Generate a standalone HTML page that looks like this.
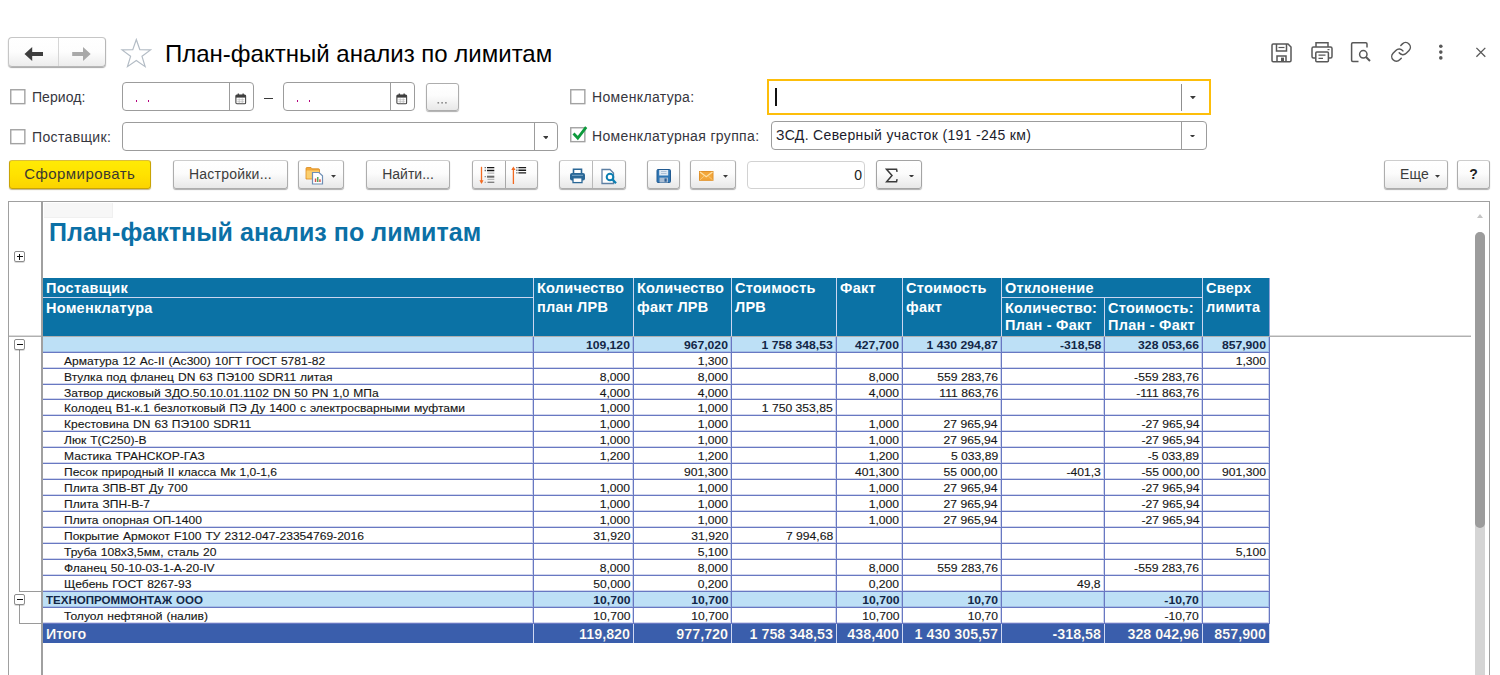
<!DOCTYPE html><html lang="ru"><head><meta charset="utf-8"><title>План-фактный анализ по лимитам</title><style>
*{box-sizing:border-box;margin:0;padding:0}
html,body{width:1500px;height:675px;overflow:hidden;background:#fff}
body{position:relative;font-family:"Liberation Sans",sans-serif;color:#3b3b3b;font-size:14px}
.a{position:absolute}
.btn{position:absolute;border:1px solid #adadad;border-radius:3px;background:linear-gradient(#ffffff 0%,#fcfcfc 45%,#e8e8e8 100%);box-shadow:0 1px 1px rgba(0,0,0,.32);height:28px;top:161px}
.tb{top:160px;height:29px;border-top-color:#cdcdcd}
.tb>svg{margin-top:1px}
.tb>.t{top:1px}
.btn .t{position:absolute;left:0;right:0;top:0;line-height:26px;text-align:center;font-size:14px;color:#3c3c3c;white-space:nowrap}
.inp{position:absolute;border:1px solid #9c9c9c;border-radius:4px;background:#fff;height:29px}
.inp .dv{position:absolute;top:0;bottom:0;width:1px;background:#9c9c9c}
.cb{position:absolute;width:15px;height:15px;border:1px solid #a3a3a3;background:#fff;box-shadow:inset 0 0 0 1px #f1f1f1}
.lbl{position:absolute;font-size:14px;line-height:16px;color:#36363e;white-space:nowrap}
.arr{position:absolute;width:0;height:0;border-left:2.800px solid transparent;border-right:2.800px solid transparent;border-top:2.800px solid #3c3c3c}
.hc{position:absolute;background:#0b72a5;color:#fff;font-weight:bold;font-size:14.500px;line-height:19px;padding:1px 0 0 3px;white-space:nowrap;letter-spacing:.25px}
.hc.s2{line-height:17px;padding-top:2px}
.row{position:absolute;left:43px;width:1227px;height:16px}
.c{position:absolute;top:0;height:16px;border-right:1px solid #6878c2;border-bottom:1px solid #6878c2;font-size:11.600px;line-height:15px;color:#161616;-webkit-text-stroke:.12px #161616;white-space:nowrap;text-align:right;padding-right:3px;overflow:hidden;box-shadow:inset -1px -1px 0 rgba(104,120,194,.3)}
.c span{display:inline-block;transform:scaleX(1.047);transform-origin:100% 50%}
.c.n span{word-spacing:.6px;transform:scaleX(1.04);transform-origin:0 50%}
.c.n{text-align:left;padding-left:21px}
.g .c{background:#bde0f6;font-weight:bold;color:#122646;-webkit-text-stroke:0}
.g .c span{transform:scaleX(1.05)}
.g .c.n span{transform:scaleX(.995)}
.g .c.n{padding-left:3px}
.tot{position:absolute;left:43px;top:624.400px;height:18.200px;width:1227px}
.tot .c{box-shadow:none;height:18.200px;background:#3a5eac;color:#fff;font-weight:bold;font-size:14.300px;line-height:20.400px;border-right:1px solid #cfd8f2;border-bottom:none}
.tot .c span,.tot .c.n span{transform:none}
.tot .c.n{padding-left:3px}
</style></head><body>
<div class="a" style="left:8px;top:37px;width:98px;height:30px;border:1px solid #b7b7b7;border-top-color:#c6c6c6;border-left-color:#c6c6c6;border-radius:4px;background:linear-gradient(#fff 0%,#fdfdfd 50%,#ececec 100%);box-shadow:0 1px 1px rgba(0,0,0,.35)">
<div class="a" style="left:48.500px;top:0;bottom:0;width:1px;background:#d6d6d6"></div>
<svg class="a" style="left:.500px;top:.500px" width="95" height="27" viewBox="0 0 95 27"><path d="M14.5 15 L22.2 8 L22.2 12.900 L33 12.900 L33 17.100 L22.2 17.100 L22.2 22 Z" fill="#3e3e3e"/><path d="M80.7 15 L73 8 L73 12.900 L62.2 12.900 L62.2 17.100 L73 17.100 L73 22 Z" fill="#a9a9a9"/></svg>
</div>
<svg class="a" style="left:118px;top:36px" width="36" height="34" viewBox="0 0 36 34"><polygon points="18.30,3.50 21.83,13.65 32.57,13.86 24.01,20.35 27.12,30.64 18.30,24.50 9.48,30.64 12.59,20.35 4.03,13.86 14.77,13.65" fill="#fff" stroke="#b3bcc5" stroke-width="1.2" stroke-linejoin="miter"/></svg>
<div class="a" style="left:165px;top:39.500px;font-size:24px;line-height:28px;color:#000;white-space:nowrap">План-фактный анализ по лимитам</div>
<svg class="a" style="left:1268px;top:39px" width="26" height="26" viewBox="0 0 26 26" fill="none" stroke="#585858" stroke-width="1.5">
<path d="M4 6.2 Q4 5 5.2 5 L20 5 L23 8 L23 21.6 Q23 22.8 21.8 22.8 L5.2 22.8 Q4 22.8 4 21.6 Z"/>
<path d="M8.5 5 L8.5 12 L18.5 12 L18.5 5"/><path d="M10.5 8.5 L16.5 8.5" stroke-width="1.2"/>
<path d="M9 22.8 L9 17 L18 17 L18 22.8"/><rect x="13" y="18.6" width="3" height="4" fill="#585858" stroke="none"/></svg>
<svg class="a" style="left:1309px;top:39px" width="26" height="26" viewBox="0 0 26 26" fill="none" stroke="#585858" stroke-width="1.5">
<path d="M7 8 L7 3.8 L19 3.8 L19 8"/>
<path d="M6.5 19 L4.5 19 Q3 19 3 17.5 L3 9.5 Q3 8 4.500 8 L21.5 8 Q23 8 23 9.5 L23 17.5 Q23 19 21.5 19 L19.500 19"/>
<rect x="6.8" y="13" width="12.6" height="9.8" rx="1"/>
<path d="M9.500 16.2 L16.500 16.2 M9.500 19.4 L14 19.4" stroke-width="1.2"/><path d="M18.5 10.6 L20.5 10.6" stroke-width="1.2"/></svg>
<svg class="a" style="left:1347px;top:39px" width="26" height="26" viewBox="0 0 26 26" fill="none" stroke="#585858" stroke-width="1.5">
<path d="M11.5 22.500 L5.8 22.500 Q4.6 22.500 4.6 21.3 L4.6 5 Q4.6 3.8 5.8 3.8 L18.8 3.8 Q20 3.8 20 5 L20 8.500"/>
<circle cx="16.3" cy="15.300" r="3.7"/><path d="M19 18 L23 22" stroke-width="2"/></svg>
<svg class="a" style="left:1387px;top:39px" width="28" height="26" viewBox="0 0 28 26" fill="none" stroke="#585858" stroke-width="1.6" stroke-linecap="round">
<g transform="translate(2.830,1.630) scale(.935)"><path d="M10 13a5 5 0 0 0 7.540.540l3-3a5 5 0 0 0-7.070-7.070l-1.720 1.710"/><path d="M14 11a5 5 0 0 0-7.540-.540l-3 3a5 5 0 0 0 7.070 7.070l1.710-1.710"/></g></svg>
<svg class="a" style="left:1436px;top:42px" width="10" height="22" viewBox="0 0 10 22"><circle cx="4.8" cy="4.300" r="1.800" fill="#585858"/><circle cx="4.8" cy="10.100" r="1.800" fill="#585858"/><circle cx="4.8" cy="15.900" r="1.800" fill="#585858"/></svg>
<svg class="a" style="left:1473px;top:44px" width="16" height="16" viewBox="0 0 16 16" stroke="#585858" stroke-width="1.3"><path d="M3.400 3.900 L12.300 12.800 M12.300 3.900 L3.400 12.800"/></svg>
<svg class="a" style="left:9px;top:88px" width="18" height="18"><rect x="1.750" y="1.750" width="14.100" height="13.900" fill="#fff" stroke="#a2a2a2" stroke-width="1.400"/></svg><div class="lbl" style="left:32px;top:89px;letter-spacing:.05px">Период:</div>
<div class="inp" style="left:122px;top:82px;width:132px"><div class="dv" style="left:106px"></div><div class="a" style="left:12.5px;top:17px;width:1.800px;height:1.800px;background:#b5007e"></div><div class="a" style="left:24.5px;top:17px;width:1.800px;height:1.800px;background:#b5007e"></div><svg class="a" style="left:112px;top:10px" width="11.500" height="11.500" viewBox="0 0 13 13"><rect x="1" y="2.200" width="11" height="10" rx="1.200" fill="#fff" stroke="#3f3f3f" stroke-width="1.2"/><rect x="1" y="2.200" width="11" height="3" fill="#3f3f3f"/><rect x="3" y="0.600" width="1.600" height="3" fill="#3f3f3f"/><rect x="8.400" y="0.600" width="1.600" height="3" fill="#3f3f3f"/><path d="M2.500 7.600 H10.500 M2.500 9.800 H10.500 M4.800 6 V11.500 M8.200 6 V11.500" stroke="#b9b9b9" stroke-width=".8"/></svg></div>
<div class="a" style="left:264px;top:98px;width:8.500px;height:1.300px;background:#3a3a3a"></div>
<div class="inp" style="left:283px;top:82px;width:132px"><div class="dv" style="left:106px"></div><div class="a" style="left:12.5px;top:17px;width:1.800px;height:1.800px;background:#b5007e"></div><div class="a" style="left:24.5px;top:17px;width:1.800px;height:1.800px;background:#b5007e"></div><svg class="a" style="left:112px;top:10px" width="11.500" height="11.500" viewBox="0 0 13 13"><rect x="1" y="2.200" width="11" height="10" rx="1.200" fill="#fff" stroke="#3f3f3f" stroke-width="1.2"/><rect x="1" y="2.200" width="11" height="3" fill="#3f3f3f"/><rect x="3" y="0.600" width="1.600" height="3" fill="#3f3f3f"/><rect x="8.400" y="0.600" width="1.600" height="3" fill="#3f3f3f"/><path d="M2.500 7.600 H10.500 M2.500 9.800 H10.500 M4.800 6 V11.500 M8.200 6 V11.500" stroke="#b9b9b9" stroke-width=".8"/></svg></div>
<div class="btn" style="left:425.500px;top:82.500px;width:33px;height:28px"><svg class="a" style="left:9px;top:16px" width="14" height="5"><rect x="1.500" y="2" width="1.600" height="1.600" fill="#8a8a8a"/><rect x="5.300" y="2" width="1.600" height="1.600" fill="#8a8a8a"/><rect x="9.100" y="2" width="1.600" height="1.600" fill="#8a8a8a"/></svg></div>
<svg class="a" style="left:569px;top:88px" width="18" height="18"><rect x="1.750" y="1.750" width="14.100" height="13.900" fill="#fff" stroke="#a2a2a2" stroke-width="1.400"/></svg><div class="lbl" style="left:592px;top:89px;letter-spacing:.35px">Номенклатура:</div>
<div class="a" style="left:767px;top:78.500px;width:443.500px;height:36.500px;border:2px solid #fdbe0a;background:#fff"><div class="a" style="left:6px;top:7.500px;width:1.500px;height:18px;background:#111"></div><div class="a" style="left:411.700px;top:3px;width:1px;height:27px;background:#8f8f8f"></div><svg class="a" style="left:421.1px;top:15.3px" width="5.8" height="3.3" viewBox="0 0 5.8 3.3"><path d="M0 0 H5.8 L2.9 3.3 Z" fill="#3a3a3a"/></svg></div>
<svg class="a" style="left:9px;top:128px" width="18" height="18"><rect x="1.750" y="1.750" width="14.100" height="13.900" fill="#fff" stroke="#a2a2a2" stroke-width="1.400"/></svg><div class="lbl" style="left:32px;top:129px;letter-spacing:.36px">Поставщик:</div>
<div class="inp" style="left:122px;top:122px;width:436px"><div class="dv" style="left:410.500px"></div><svg class="a" style="left:419.6px;top:13.0px" width="5.8" height="3.3" viewBox="0 0 5.8 3.3"><path d="M0 0 H5.8 L2.9 3.3 Z" fill="#3a3a3a"/></svg></div>
<svg class="a" style="left:569.300px;top:126.400px" width="18" height="18"><rect x="1.750" y="1.750" width="14.100" height="13.900" fill="#fff" stroke="#a2a2a2" stroke-width="1.400"/></svg><svg class="a" style="left:570px;top:124px" width="20" height="20" viewBox="0 0 20 20"><path d="M3.500 9.500 L7.800 14 L16.200 3.200" fill="none" stroke="#0d9a3c" stroke-width="2.800"/></svg><div class="lbl" style="left:592px;top:127.800px;letter-spacing:.35px">Номенклатурная группа:</div>
<div class="inp" style="left:771px;top:121px;width:435.500px"><div class="dv" style="left:409px"></div><svg class="a" style="left:418.2px;top:12.5px" width="5.0" height="2.8" viewBox="0 0 5.0 2.8"><path d="M0 0 H5.0 L2.5 2.8 Z" fill="#3a3a3a"/></svg><div class="a" style="left:4px;top:5px;font-size:14px;line-height:17px;color:#1c1c2c;white-space:nowrap;letter-spacing:.35px">ЗСД. Северный участок (191 -245 км)</div></div>
<div class="btn tb" style="left:8.500px;width:142.500px;border-color:#c9a405;border-top-color:#dcbf3a;background:linear-gradient(#ffea05 0%,#ffe200 50%,#fbd300 100%);box-shadow:0 1px 1px rgba(120,90,0,.45)"><div class="t" style="font-size:15px;letter-spacing:.45px;color:#3b3930">Сформировать</div></div>
<div class="btn tb" style="left:173px;width:115px"><div class="t" style="letter-spacing:.22px">Настройки...</div></div>
<div class="btn tb" style="left:298px;width:46px"><svg class="a" style="left:6px;top:2.700px" width="20" height="20" viewBox="0 0 20 20"><path d="M1 3.500 Q1 2.500 2 2.500 L6 2.500 L7.200 3.800 L13.500 3.800 Q14.500 3.800 14.500 4.800 L14.500 14 L1 14 Z" fill="#f2a83a" stroke="#d98a1c" stroke-width=".8"/><path d="M1.500 5.500 H14 V13.500 H1.500 Z" fill="#fbcf6e"/><path d="M7.500 7.500 H14 L17.500 10.800 V19 H7.500 Z" fill="#fff" stroke="#6f8fb5" stroke-width="1.200"/><rect x="9.800" y="13.500" width="1.500" height="3.500" fill="#d4534a"/><rect x="12" y="12" width="1.500" height="5" fill="#58a65c"/><rect x="14.200" y="14.300" width="1.500" height="2.700" fill="#d4534a"/></svg><svg class="a" style="left:32.0px;top:13.0px" width="5.0" height="2.8" viewBox="0 0 5.0 2.8"><path d="M0 0 H5.0 L2.5 2.8 Z" fill="#3a3a3a"/></svg></div>
<div class="btn tb" style="left:366px;width:84px"><div class="t">Найти...</div></div>
<div class="btn tb" style="left:472px;width:66px"><div class="a" style="left:32px;top:0;bottom:0;width:1px;background:#a8a8a8"></div>
<svg class="a" style="left:0;top:-1px" width="64" height="27" viewBox="0 0 64 27"><path d="M8.500 5.800 V21.500" stroke="#f26a21" stroke-width="1.300"/><path d="M6.500 19.300 L8.500 23 L10.500 19.300 Z" fill="#f26a21"/>
<path d="M14 6.600 H21.300 M14 9.500 H21.300" stroke="#161616" stroke-width="1.300"/><path d="M11.600 6.600 H12.900 M11.600 9.500 H12.900" stroke="#666" stroke-width="1.300"/>
<path d="M14.500 12.200 H21.300 M14.500 18.300 H21.300" stroke="#b5b5b5" stroke-width="1.300"/>
<path d="M14 15.700 H21.300" stroke="#6a6a6a" stroke-width="2"/><path d="M11.600 15.700 H12.900" stroke="#8a8a8a" stroke-width="1.300"/>
<path d="M14.500 21.300 H21.300" stroke="#7a7a7a" stroke-width="1.300"/><path d="M11.600 21.300 H12.900" stroke="#aaa" stroke-width="1.300"/>
<path d="M40.400 7 V23" stroke="#f26a21" stroke-width="1.300"/><path d="M38.300 9 L40.400 5.500 L42.500 9 Z" fill="#f26a21"/>
<path d="M45.400 6.600 H53.100 M45.400 9.300 H53.100 M45.400 11.900 H53.100" stroke="#1a1a1a" stroke-width="1.400"/><path d="M43.200 6.600 H44.500 M43.200 9.300 H44.500 M43.200 11.900 H44.500" stroke="#666" stroke-width="1.400"/></svg></div>
<div class="btn tb" style="left:559px;width:67px"><div class="a" style="left:32px;top:0;bottom:0;width:1px;background:#b9b9b9"></div>
<svg class="a" style="left:0;top:0" width="65" height="26" viewBox="0 0 65 26">
<path d="M13.500 11 V7.200 H21.500 V11" fill="#fff" stroke="#2a6796" stroke-width="1.600"/>
<rect x="10" y="11" width="15" height="7.500" rx="2" fill="#2a6796"/>
<rect x="13" y="15.800" width="9" height="4.800" fill="#fff" stroke="#2a6796" stroke-width="1.300"/>
<path d="M12 13.300 H23" stroke="#7fa9c9" stroke-width="1"/>
<path d="M42 7.500 H50 L53.500 11 V21.500 H42 Z" fill="#fff" stroke="#5d7fa3" stroke-width="1.300"/>
<circle cx="50" cy="15" r="3.300" fill="#fff" stroke="#0c7fb2" stroke-width="2"/><path d="M52.500 17.500 L56 21.200" stroke="#0c7fb2" stroke-width="2.300"/></svg></div>
<div class="btn tb" style="left:647px;width:33px"><svg class="a" style="left:0;top:0" width="31" height="26" viewBox="0 0 31 26">
<rect x="9" y="7.500" width="13.500" height="13" rx="1" fill="#2f76b5" stroke="#215a91" stroke-width="1"/><rect x="11.200" y="8" width="9" height="5.500" fill="#dfe9f3"/><path d="M13 9.500 H18.500 M13 11.500 H18.500" stroke="#9fb6cf" stroke-width=".8"/><rect x="11.500" y="15.600" width="8.500" height="4.900" fill="#a9bdd3"/><rect x="16.500" y="16.400" width="2.200" height="3.300" fill="#2f5f95"/></svg></div>
<div class="btn tb" style="left:690px;width:46px"><svg class="a" style="left:0;top:0" width="44" height="26" viewBox="0 0 44 26">
<rect x="8.500" y="9.500" width="13.500" height="8.800" fill="#f3a73b" stroke="#e0912a" stroke-width="1"/><path d="M9 10 L15.250 14.800 L21.500 10" fill="none" stroke="#fde1a6" stroke-width="1.300"/><path d="M9 17.800 L13.200 14 M21.500 17.800 L17.300 14" stroke="#f9c877" stroke-width="1"/></svg><svg class="a" style="left:32.0px;top:13.0px" width="5.0" height="2.8" viewBox="0 0 5.0 2.8"><path d="M0 0 H5.0 L2.5 2.8 Z" fill="#3a3a3a"/></svg></div>
<div class="a" style="left:747px;top:161px;width:118px;height:28px;border:1px solid #d2d2d2;border-radius:4px;background:#fff"><div class="a" style="right:2px;top:5px;font-size:14px;line-height:16px;color:#222">0</div></div>
<div class="btn tb" style="left:876px;width:46px;border-color:#a4a4a4"><svg class="a" style="left:8.300px;top:5.500px" width="14" height="15.750" viewBox="0 0 16 18"><path d="M13.800 4.500 L13.200 1.500 L1.800 1.500 L8 8.500 L1.800 15.800 L13.200 15.800 L13.800 12.800" fill="none" stroke="#3a3a3a" stroke-width="1.700" stroke-linejoin="miter"/></svg><svg class="a" style="left:31.8px;top:12.7px" width="5.0" height="2.8" viewBox="0 0 5.0 2.8"><path d="M0 0 H5.0 L2.5 2.8 Z" fill="#3a3a3a"/></svg></div>
<div class="btn tb" style="left:1384px;width:64px"><div class="t" style="text-align:left;left:15px;letter-spacing:.1px">Еще</div><svg class="a" style="left:50.0px;top:13.0px" width="5.0" height="2.8" viewBox="0 0 5.0 2.8"><path d="M0 0 H5.0 L2.5 2.8 Z" fill="#3a3a3a"/></svg></div>
<div class="btn tb" style="left:1457px;width:33px"><div class="t" style="font-weight:bold;color:#222">?</div></div>
<div class="a" style="left:8px;top:200.500px;width:1482px;height:480px;border:1.500px solid #a0a0a0;background:#fff"></div>
<div class="a" style="left:41.400px;top:202px;width:1.400px;height:480px;background:#a0a0a0"></div>
<div class="a" style="left:44px;top:203px;width:69px;height:15px;background:#f7f7f7;border-right:1px solid #f0f0f0;border-bottom:1px solid #f0f0f0"></div>
<div class="a" style="left:49px;top:217px;font-size:25px;line-height:30px;font-weight:bold;color:#0b70a6;white-space:nowrap;letter-spacing:.04px">План-фактный анализ по лимитам</div>
<div class="a" style="left:14px;top:251px;width:11px;height:11px;border:1px solid #8c8c8c;border-radius:2px;background:#fff;box-shadow:0 1px 0 rgba(0,0,0,.15)"><div class="a" style="left:1.500px;top:3.600px;width:6px;height:1.800px;background:#111"></div><div class="a" style="left:3.600px;top:1.500px;width:1.800px;height:6px;background:#111"></div></div>
<svg class="a" style="left:9px;top:334px" width="1463" height="4"><rect x="0" y="1.600" width="1462" height="1.250" fill="#a3a3a3"/></svg>
<div class="a" style="left:19px;top:350px;width:1.300px;height:241px;background:#9a9a9a"></div>
<div class="a" style="left:19px;top:590.500px;width:23px;height:1.300px;background:#9a9a9a"></div>
<div class="a" style="left:19px;top:605px;width:1.300px;height:18px;background:#9a9a9a"></div>
<div class="a" style="left:19px;top:622.500px;width:23px;height:1.300px;background:#9a9a9a"></div>
<div class="a" style="left:14px;top:339px;width:11px;height:11px;border:1px solid #8c8c8c;border-radius:2px;background:#fff;box-shadow:0 1px 0 rgba(0,0,0,.15)"><div class="a" style="left:1.500px;top:3.600px;width:6px;height:1.800px;background:#111"></div></div>
<div class="a" style="left:14px;top:594px;width:11px;height:11px;border:1px solid #8c8c8c;border-radius:2px;background:#fff;box-shadow:0 1px 0 rgba(0,0,0,.15)"><div class="a" style="left:1.500px;top:3.600px;width:6px;height:1.800px;background:#111"></div></div>
<div class="a" style="left:43px;top:278px;width:1227px;height:58px;background:#cbd6f0"></div>
<div class="hc " style="left:43px;top:278px;width:490px;height:19px">Поставщик</div>
<div class="hc " style="left:43px;top:298px;width:490px;height:38px">Номенклатура</div>
<div class="hc " style="left:534px;top:278px;width:99px;height:58px">Количество<br>план ЛРВ</div>
<div class="hc " style="left:634px;top:278px;width:97px;height:58px">Количество<br>факт ЛРВ</div>
<div class="hc " style="left:732px;top:278px;width:104px;height:58px">Стоимость<br>ЛРВ</div>
<div class="hc " style="left:837px;top:278px;width:65px;height:58px">Факт</div>
<div class="hc " style="left:903px;top:278px;width:98px;height:58px">Стоимость<br>факт</div>
<div class="hc " style="left:1002px;top:278px;width:200px;height:19px">Отклонение</div>
<div class="hc s2" style="left:1002px;top:298px;width:102px;height:38px">Количество:<br>План - Факт</div>
<div class="hc s2" style="left:1105px;top:298px;width:97px;height:38px">Стоимость:<br>План - Факт</div>
<div class="hc " style="left:1203px;top:278px;width:66px;height:58px">Сверх<br>лимита</div>
<div class="a" style="left:1269px;top:278px;width:1px;height:58px;background:#8fa3d6"></div>
<div class="row g" style="top:337px;height:16px"><div class="c n" style="left:0px;width:491px"><span></span></div><div class="c " style="left:491px;width:100px"><span>109,120</span></div><div class="c " style="left:591px;width:98px"><span>967,020</span></div><div class="c " style="left:689px;width:105px"><span>1 758 348,53</span></div><div class="c " style="left:794px;width:66px"><span>427,700</span></div><div class="c " style="left:860px;width:99px"><span>1 430 294,87</span></div><div class="c " style="left:959px;width:103px"><span>-318,58</span></div><div class="c " style="left:1062px;width:98px"><span>328 053,66</span></div><div class="c " style="left:1160px;width:67px"><span>857,900</span></div></div>
<div class="row " style="top:353px;height:16px"><div class="c n" style="left:0px;width:491px"><span>Арматура 12 Ас-II (Ас300) 10ГТ ГОСТ 5781-82</span></div><div class="c " style="left:491px;width:100px"><span></span></div><div class="c " style="left:591px;width:98px"><span>1,300</span></div><div class="c " style="left:689px;width:105px"><span></span></div><div class="c " style="left:794px;width:66px"><span></span></div><div class="c " style="left:860px;width:99px"><span></span></div><div class="c " style="left:959px;width:103px"><span></span></div><div class="c " style="left:1062px;width:98px"><span></span></div><div class="c " style="left:1160px;width:67px"><span>1,300</span></div></div>
<div class="row " style="top:369px;height:16px"><div class="c n" style="left:0px;width:491px"><span>Втулка под фланец DN 63 ПЭ100 SDR11 литая</span></div><div class="c " style="left:491px;width:100px"><span>8,000</span></div><div class="c " style="left:591px;width:98px"><span>8,000</span></div><div class="c " style="left:689px;width:105px"><span></span></div><div class="c " style="left:794px;width:66px"><span>8,000</span></div><div class="c " style="left:860px;width:99px"><span>559 283,76</span></div><div class="c " style="left:959px;width:103px"><span></span></div><div class="c " style="left:1062px;width:98px"><span>-559 283,76</span></div><div class="c " style="left:1160px;width:67px"><span></span></div></div>
<div class="row " style="top:385px;height:15px"><div class="c n" style="left:0px;width:491px;height:15px"><span>Затвор дисковый ЗДО.50.10.01.1102 DN 50 PN 1,0 МПа</span></div><div class="c " style="left:491px;width:100px;height:15px"><span>4,000</span></div><div class="c " style="left:591px;width:98px;height:15px"><span>4,000</span></div><div class="c " style="left:689px;width:105px;height:15px"><span></span></div><div class="c " style="left:794px;width:66px;height:15px"><span>4,000</span></div><div class="c " style="left:860px;width:99px;height:15px"><span>111 863,76</span></div><div class="c " style="left:959px;width:103px;height:15px"><span></span></div><div class="c " style="left:1062px;width:98px;height:15px"><span>-111 863,76</span></div><div class="c " style="left:1160px;width:67px;height:15px"><span></span></div></div>
<div class="row " style="top:400px;height:16px"><div class="c n" style="left:0px;width:491px"><span>Колодец В1-к.1 безлотковый ПЭ Ду 1400 с электросварными муфтами</span></div><div class="c " style="left:491px;width:100px"><span>1,000</span></div><div class="c " style="left:591px;width:98px"><span>1,000</span></div><div class="c " style="left:689px;width:105px"><span>1 750 353,85</span></div><div class="c " style="left:794px;width:66px"><span></span></div><div class="c " style="left:860px;width:99px"><span></span></div><div class="c " style="left:959px;width:103px"><span></span></div><div class="c " style="left:1062px;width:98px"><span></span></div><div class="c " style="left:1160px;width:67px"><span></span></div></div>
<div class="row " style="top:416px;height:16px"><div class="c n" style="left:0px;width:491px"><span>Крестовина DN 63 ПЭ100 SDR11</span></div><div class="c " style="left:491px;width:100px"><span>1,000</span></div><div class="c " style="left:591px;width:98px"><span>1,000</span></div><div class="c " style="left:689px;width:105px"><span></span></div><div class="c " style="left:794px;width:66px"><span>1,000</span></div><div class="c " style="left:860px;width:99px"><span>27 965,94</span></div><div class="c " style="left:959px;width:103px"><span></span></div><div class="c " style="left:1062px;width:98px"><span>-27 965,94</span></div><div class="c " style="left:1160px;width:67px"><span></span></div></div>
<div class="row " style="top:432px;height:16px"><div class="c n" style="left:0px;width:491px"><span>Люк Т(С250)-В</span></div><div class="c " style="left:491px;width:100px"><span>1,000</span></div><div class="c " style="left:591px;width:98px"><span>1,000</span></div><div class="c " style="left:689px;width:105px"><span></span></div><div class="c " style="left:794px;width:66px"><span>1,000</span></div><div class="c " style="left:860px;width:99px"><span>27 965,94</span></div><div class="c " style="left:959px;width:103px"><span></span></div><div class="c " style="left:1062px;width:98px"><span>-27 965,94</span></div><div class="c " style="left:1160px;width:67px"><span></span></div></div>
<div class="row " style="top:448px;height:16px"><div class="c n" style="left:0px;width:491px"><span>Мастика ТРАНСКОР-ГАЗ</span></div><div class="c " style="left:491px;width:100px"><span>1,200</span></div><div class="c " style="left:591px;width:98px"><span>1,200</span></div><div class="c " style="left:689px;width:105px"><span></span></div><div class="c " style="left:794px;width:66px"><span>1,200</span></div><div class="c " style="left:860px;width:99px"><span>5 033,89</span></div><div class="c " style="left:959px;width:103px"><span></span></div><div class="c " style="left:1062px;width:98px"><span>-5 033,89</span></div><div class="c " style="left:1160px;width:67px"><span></span></div></div>
<div class="row " style="top:464px;height:16px"><div class="c n" style="left:0px;width:491px"><span>Песок природный II класса Мк 1,0-1,6</span></div><div class="c " style="left:491px;width:100px"><span></span></div><div class="c " style="left:591px;width:98px"><span>901,300</span></div><div class="c " style="left:689px;width:105px"><span></span></div><div class="c " style="left:794px;width:66px"><span>401,300</span></div><div class="c " style="left:860px;width:99px"><span>55 000,00</span></div><div class="c " style="left:959px;width:103px"><span>-401,3</span></div><div class="c " style="left:1062px;width:98px"><span>-55 000,00</span></div><div class="c " style="left:1160px;width:67px"><span>901,300</span></div></div>
<div class="row " style="top:480px;height:16px"><div class="c n" style="left:0px;width:491px"><span>Плита ЗПВ-ВТ Ду 700</span></div><div class="c " style="left:491px;width:100px"><span>1,000</span></div><div class="c " style="left:591px;width:98px"><span>1,000</span></div><div class="c " style="left:689px;width:105px"><span></span></div><div class="c " style="left:794px;width:66px"><span>1,000</span></div><div class="c " style="left:860px;width:99px"><span>27 965,94</span></div><div class="c " style="left:959px;width:103px"><span></span></div><div class="c " style="left:1062px;width:98px"><span>-27 965,94</span></div><div class="c " style="left:1160px;width:67px"><span></span></div></div>
<div class="row " style="top:496px;height:16px"><div class="c n" style="left:0px;width:491px"><span>Плита ЗПН-В-7</span></div><div class="c " style="left:491px;width:100px"><span>1,000</span></div><div class="c " style="left:591px;width:98px"><span>1,000</span></div><div class="c " style="left:689px;width:105px"><span></span></div><div class="c " style="left:794px;width:66px"><span>1,000</span></div><div class="c " style="left:860px;width:99px"><span>27 965,94</span></div><div class="c " style="left:959px;width:103px"><span></span></div><div class="c " style="left:1062px;width:98px"><span>-27 965,94</span></div><div class="c " style="left:1160px;width:67px"><span></span></div></div>
<div class="row " style="top:512px;height:16px"><div class="c n" style="left:0px;width:491px"><span>Плита опорная ОП-1400</span></div><div class="c " style="left:491px;width:100px"><span>1,000</span></div><div class="c " style="left:591px;width:98px"><span>1,000</span></div><div class="c " style="left:689px;width:105px"><span></span></div><div class="c " style="left:794px;width:66px"><span>1,000</span></div><div class="c " style="left:860px;width:99px"><span>27 965,94</span></div><div class="c " style="left:959px;width:103px"><span></span></div><div class="c " style="left:1062px;width:98px"><span>-27 965,94</span></div><div class="c " style="left:1160px;width:67px"><span></span></div></div>
<div class="row " style="top:528px;height:16px"><div class="c n" style="left:0px;width:491px"><span>Покрытие Армокот F100 ТУ 2312-047-23354769-2016</span></div><div class="c " style="left:491px;width:100px"><span>31,920</span></div><div class="c " style="left:591px;width:98px"><span>31,920</span></div><div class="c " style="left:689px;width:105px"><span>7 994,68</span></div><div class="c " style="left:794px;width:66px"><span></span></div><div class="c " style="left:860px;width:99px"><span></span></div><div class="c " style="left:959px;width:103px"><span></span></div><div class="c " style="left:1062px;width:98px"><span></span></div><div class="c " style="left:1160px;width:67px"><span></span></div></div>
<div class="row " style="top:544px;height:16px"><div class="c n" style="left:0px;width:491px"><span>Труба 108х3,5мм, сталь 20</span></div><div class="c " style="left:491px;width:100px"><span></span></div><div class="c " style="left:591px;width:98px"><span>5,100</span></div><div class="c " style="left:689px;width:105px"><span></span></div><div class="c " style="left:794px;width:66px"><span></span></div><div class="c " style="left:860px;width:99px"><span></span></div><div class="c " style="left:959px;width:103px"><span></span></div><div class="c " style="left:1062px;width:98px"><span></span></div><div class="c " style="left:1160px;width:67px"><span>5,100</span></div></div>
<div class="row " style="top:560px;height:16px"><div class="c n" style="left:0px;width:491px"><span>Фланец 50-10-03-1-А-20-IV</span></div><div class="c " style="left:491px;width:100px"><span>8,000</span></div><div class="c " style="left:591px;width:98px"><span>8,000</span></div><div class="c " style="left:689px;width:105px"><span></span></div><div class="c " style="left:794px;width:66px"><span>8,000</span></div><div class="c " style="left:860px;width:99px"><span>559 283,76</span></div><div class="c " style="left:959px;width:103px"><span></span></div><div class="c " style="left:1062px;width:98px"><span>-559 283,76</span></div><div class="c " style="left:1160px;width:67px"><span></span></div></div>
<div class="row " style="top:576px;height:16px"><div class="c n" style="left:0px;width:491px"><span>Щебень ГОСТ 8267-93</span></div><div class="c " style="left:491px;width:100px"><span>50,000</span></div><div class="c " style="left:591px;width:98px"><span>0,200</span></div><div class="c " style="left:689px;width:105px"><span></span></div><div class="c " style="left:794px;width:66px"><span>0,200</span></div><div class="c " style="left:860px;width:99px"><span></span></div><div class="c " style="left:959px;width:103px"><span>49,8</span></div><div class="c " style="left:1062px;width:98px"><span></span></div><div class="c " style="left:1160px;width:67px"><span></span></div></div>
<div class="row g" style="top:592px;height:16px"><div class="c n" style="left:0px;width:491px"><span>ТЕХНОПРОММОНТАЖ ООО</span></div><div class="c " style="left:491px;width:100px"><span>10,700</span></div><div class="c " style="left:591px;width:98px"><span>10,700</span></div><div class="c " style="left:689px;width:105px"><span></span></div><div class="c " style="left:794px;width:66px"><span>10,700</span></div><div class="c " style="left:860px;width:99px"><span>10,70</span></div><div class="c " style="left:959px;width:103px"><span></span></div><div class="c " style="left:1062px;width:98px"><span>-10,70</span></div><div class="c " style="left:1160px;width:67px"><span></span></div></div>
<div class="row " style="top:608px;height:16px"><div class="c n" style="left:0px;width:491px"><span>Толуол нефтяной (налив)</span></div><div class="c " style="left:491px;width:100px"><span>10,700</span></div><div class="c " style="left:591px;width:98px"><span>10,700</span></div><div class="c " style="left:689px;width:105px"><span></span></div><div class="c " style="left:794px;width:66px"><span>10,700</span></div><div class="c " style="left:860px;width:99px"><span>10,70</span></div><div class="c " style="left:959px;width:103px"><span></span></div><div class="c " style="left:1062px;width:98px"><span>-10,70</span></div><div class="c " style="left:1160px;width:67px"><span></span></div></div>
<div class="tot"><div class="c n" style="left:0px;width:491px"><span>Итого</span></div><div class="c " style="left:491px;width:100px"><span>119,820</span></div><div class="c " style="left:591px;width:98px"><span>977,720</span></div><div class="c " style="left:689px;width:105px"><span>1 758 348,53</span></div><div class="c " style="left:794px;width:66px"><span>438,400</span></div><div class="c " style="left:860px;width:99px"><span>1 430 305,57</span></div><div class="c " style="left:959px;width:103px"><span>-318,58</span></div><div class="c " style="left:1062px;width:98px"><span>328 042,96</span></div><div class="c " style="left:1160px;width:67px"><span>857,900</span></div></div>
<div class="a" style="left:1475px;top:232px;width:10px;height:443px;background:#d5d5d5;border-radius:5px 5px 0 0"></div>
<div class="a" style="left:1475px;top:232px;width:10px;height:296px;background:#9c9c9c;border-radius:5px"></div>
<div class="a" style="left:1476.500px;top:214px;width:0;height:0;border-left:3.500px solid transparent;border-right:3.500px solid transparent;border-bottom:4px solid #c4c4c4"></div>
</body></html>
